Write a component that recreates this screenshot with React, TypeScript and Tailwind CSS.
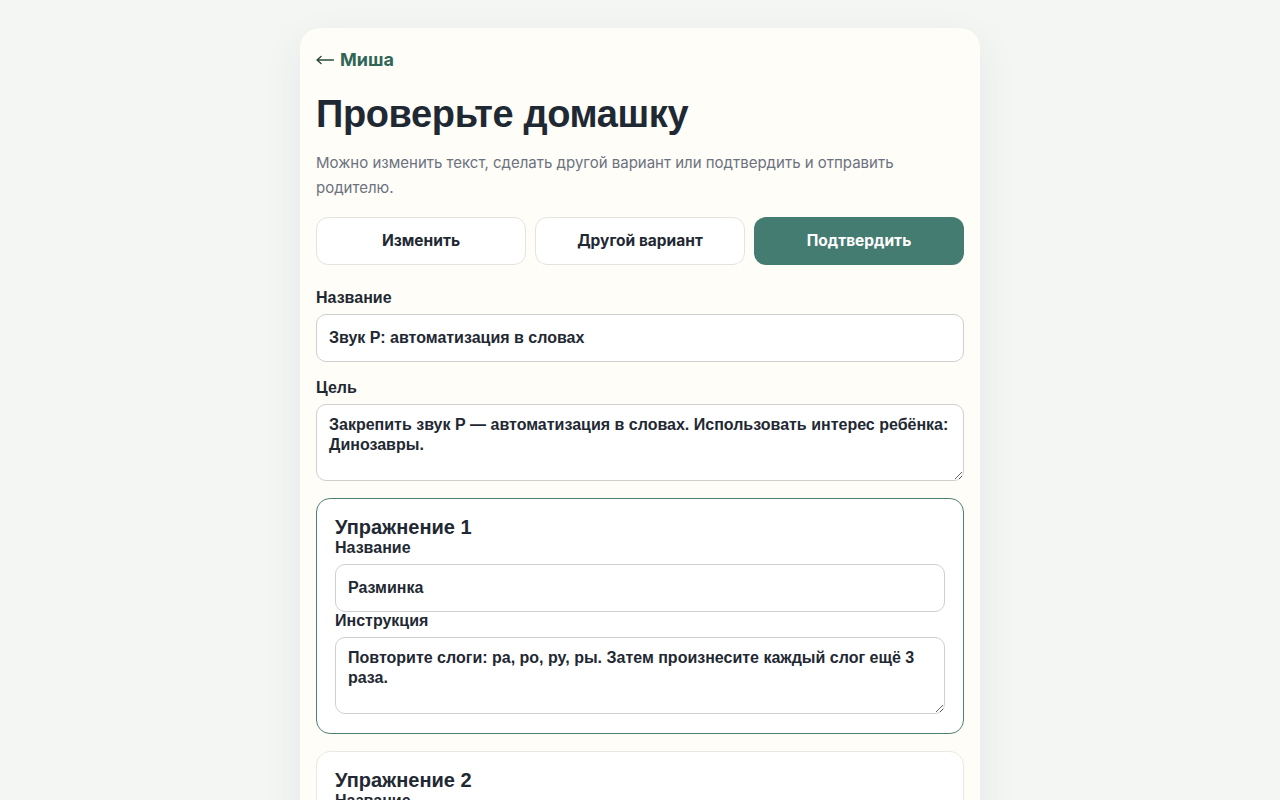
import { useState } from 'react'

interface Exercise {
  id: number
  title: string
  instruction: string
}

const initialExercises: Exercise[] = [
  {
    id: 1,
    title: 'Разминка',
    instruction: 'Повторите слоги: ра, ро, ру, ры. Затем произнесите каждый слог ещё 3 раза.',
  },
  {
    id: 2,
    title: 'Слова с динозаврами',
    instruction: 'Назовите картинки: рык, рог, раптор, тираннозавр. Следите за звуком Р.',
  },
  {
    id: 3,
    title: 'Игра',
    instruction: 'Придумайте вместе короткую историю про динозавра Рекса.',
  },
]

const labelCls = 'block text-[16px] leading-[18px] font-bold text-[#1f2933] mb-[7px]'
const inputCls =
  'block w-full h-12 px-3 rounded-[10px] border border-[#cfcfcf] bg-white text-[16px] font-bold text-[#1f2933] outline-none'
const textareaCls =
  'block w-full h-[77px] px-3 py-[10px] rounded-[10px] border border-[#cfcfcf] bg-white text-[16px] leading-5 font-bold text-[#1f2933] outline-none'

export default function App() {
  const [title, setTitle] = useState('Звук Р: автоматизация в словах')
  const [goal, setGoal] = useState(
    'Закрепить звук Р — автоматизация в словах. Использовать интерес ребёнка: Динозавры.'
  )
  const [exercises, setExercises] = useState(initialExercises)
  const [active, setActive] = useState(1)

  const update = (id: number, key: 'title' | 'instruction', value: string) => {
    setExercises(list => list.map(e => (e.id === id ? { ...e, [key]: value } : e)))
  }

  return (
    <div className="min-h-screen bg-[#f4f6f4] pt-7 pb-10 font-['Liberation_Sans',Arial,sans-serif]">
      <div className="mx-auto w-[680px] rounded-[20px] bg-[#fffdf7] px-4 pt-4 pb-6 shadow-[0_12px_40px_rgba(30,50,40,0.07)]">
        {/* Header */}
        <a href="#" className="flex items-center h-[30px] text-[18px] font-bold text-[#2f6656] font-['Inter',sans-serif]">
          <svg width="18" height="10" viewBox="0 0 18 10" className="mr-[6px] mt-[1px] text-[#2a4a40]">
            <path d="M17.5 5H1M1 5L5 1.5M1 5L5 8.5" fill="none" stroke="currentColor" strokeWidth="1.4" strokeLinecap="round" strokeLinejoin="round" />
          </svg>
          Миша
        </a>
        <h1 className="mt-4 text-[38px] leading-[48px] font-bold tracking-[-0.01em] text-[#1f2933]">
          Проверьте домашку
        </h1>
        <p className="mt-3 text-[15px] leading-[25px] text-[#6b7280] font-['Inter',sans-serif]">
          Можно изменить текст, сделать другой вариант или подтвердить и отправить родителю.
        </p>

        {/* Actions */}
        <div className="mt-[17px] grid grid-cols-3 gap-[9px] font-['Inter',sans-serif]">
          <button className="h-12 rounded-xl border border-[#e6e3dc] bg-white text-[15.5px] font-bold text-[#1f2933]">
            Изменить
          </button>
          <button className="h-12 rounded-xl border border-[#e6e3dc] bg-white text-[15.5px] font-bold text-[#1f2933]">
            Другой вариант
          </button>
          <button className="h-12 rounded-xl bg-[#447c71] text-[15.5px] font-bold text-white">
            Подтвердить
          </button>
        </div>

        {/* Form */}
        <div className="mt-6">
          <label className={labelCls}>Название</label>
          <input className={inputCls} value={title} onChange={e => setTitle(e.target.value)} />
        </div>
        <div className="mt-[17px]">
          <label className={labelCls}>Цель</label>
          <textarea className={textareaCls} value={goal} onChange={e => setGoal(e.target.value)} />
        </div>

        {/* Exercises */}
        {exercises.map((ex, i) => (
          <div
            key={ex.id}
            onClick={() => setActive(ex.id)}
            className={`mt-[17px] rounded-[14px] border bg-white px-[18px] pt-4 pb-[19px] ${
              active === ex.id ? 'border-[#4f8073]' : 'border-[#ece8df]'
            }`}
          >
            <h3 className="text-[20px] leading-[24px] font-bold text-[#1f2933]">Упражнение {i + 1}</h3>
            <label className={labelCls}>Название</label>
            <input
              className={inputCls}
              value={ex.title}
              onChange={e => update(ex.id, 'title', e.target.value)}
            />
            <label className={labelCls}>Инструкция</label>
            <textarea
              className={textareaCls}
              value={ex.instruction}
              onChange={e => update(ex.id, 'instruction', e.target.value)}
            />
          </div>
        ))}
      </div>
    </div>
  )
}
